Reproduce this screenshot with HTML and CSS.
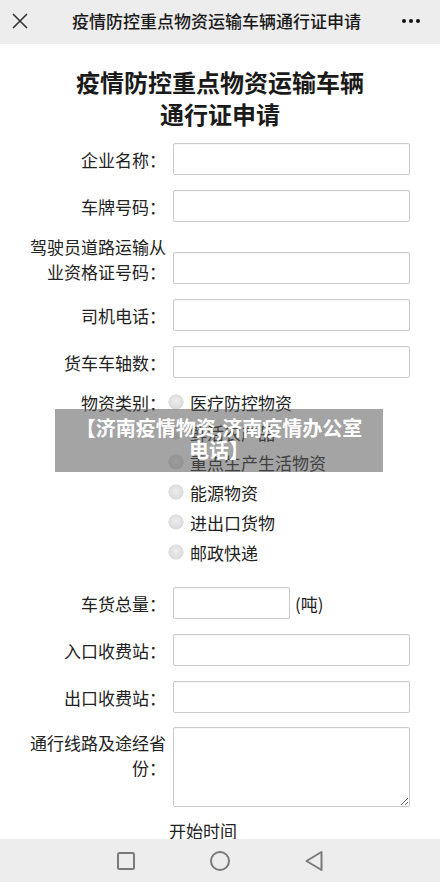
FILE: index.html
```html
<!DOCTYPE html>
<html lang="zh-CN">
<head>
<meta charset="utf-8">
<title>疫情防控重点物资运输车辆通行证申请</title>
<link rel="stylesheet" href="styles.css">
</head>
<body>
<div class="screen">
  <header class="topbar">
    <svg class="close" width="16" height="16" viewBox="0 0 16 16"><path d="M1 1L15 15M15 1L1 15" stroke="#333" stroke-width="1.6" fill="none"/></svg>
    <div class="topbar-title">疫情防控重点物资运输车辆通行证申请</div>
    <svg class="more" width="20" height="6" viewBox="0 0 20 6"><circle cx="3" cy="3" r="2" fill="#111"/><circle cx="10" cy="3" r="2" fill="#111"/><circle cx="17" cy="3" r="2" fill="#111"/></svg>
  </header>
  <main class="page">
    <h1 class="title">疫情防控重点物资运输车辆<br>通行证申请</h1>
    <form class="form">
      <div class="row first"><label class="label">企业名称：</label><input class="field" type="text"></div>
      <div class="row"><label class="label">车牌号码：</label><input class="field" type="text"></div>
      <div class="row multi"><label class="label">驾驶员道路运输从业资格证号码：</label><input class="field" type="text"></div>
      <div class="row"><label class="label">司机电话：</label><input class="field" type="text"></div>
      <div class="row"><label class="label">货车车轴数：</label><input class="field" type="text"></div>
      <div class="row radios-row"><label class="label radio-label">物资类别：</label>
        <div class="radios">
          <div class="option"><span class="radio"></span>医疗防控物资</div>
          <div class="option"><span class="radio"></span>鲜活农产品</div>
          <div class="option"><span class="radio"></span>重点生产生活物资</div>
          <div class="option"><span class="radio"></span>能源物资</div>
          <div class="option"><span class="radio"></span>进出口货物</div>
          <div class="option"><span class="radio"></span>邮政快递</div>
        </div>
      </div>
      <div class="row weight-row"><label class="label">车货总量：</label><input class="field short" type="text"><span class="unit">(吨)</span></div>
      <div class="row"><label class="label">入口收费站：</label><input class="field" type="text"></div>
      <div class="row"><label class="label">出口收费站：</label><input class="field" type="text"></div>
      <div class="row area-row"><label class="label area-label">通行线路及途经省份：</label><textarea class="field area"></textarea></div>
      <div class="start">开始时间</div>
    </form>
  </main>
  <div class="banner">【济南疫情物资,济南疫情办公室<br>电话】</div>
  <nav class="navbar">
    <svg width="18" height="18" viewBox="0 0 18 18"><rect x="1" y="1" width="16" height="16" rx="1.5" fill="none" stroke="#7a7a7a" stroke-width="2"/></svg>
    <svg width="20" height="20" viewBox="0 0 20 20"><circle cx="10" cy="10" r="9" fill="none" stroke="#7a7a7a" stroke-width="2"/></svg>
    <svg width="18" height="22" viewBox="0 0 18 22"><path d="M1.5 11L16.5 2V20Z" fill="none" stroke="#7a7a7a" stroke-width="2" stroke-linejoin="round"/></svg>
  </nav>
</div>
</body>
</html>
```
FILE: styles.css
```css
* { box-sizing: border-box; }
html, body { margin: 0; padding: 0; }
body {
  font-family: "Noto Sans CJK SC", "Noto Sans", sans-serif;
  color: #222;
  background: #fff;
}
.screen {
  position: relative;
  width: 440px;
  height: 882px;
  display: flex;
  flex-direction: column;
  overflow: hidden;
}
.topbar {
  height: 44px;
  flex: none;
  background: #ededed;
  display: grid;
  grid-template-columns: 1fr auto 1fr;
  align-items: center;
  padding: 0 19px 0 12px;
}
.close { justify-self: start; margin-top: -2px; }
.more { justify-self: end; margin-top: -2px; }
.topbar-title {
  font-size: 17px;
  font-weight: 500;
  color: #1a1a1a;
  line-height: 24px;
  margin-top: -2px;
}
.page {
  flex: 1;
  overflow: hidden;
}
.title {
  margin: 22px 0 0;
  text-align: center;
  font-size: 24px;
  line-height: 32px;
  font-weight: 700;
  color: #1a1a1a;
}
.form { margin: 0; }
.row {
  display: flex;
  align-items: center;
  margin-top: 15px;
  font-size: 17px;
}
.row.first { margin-top: 13px; }
.label {
  width: 150px;
  margin-left: 16px;
  text-align: right;
  line-height: 25px;
  color: #222;
  flex: none;
}
.field {
  width: 237px;
  height: 32px;
  margin: 0 0 0 7px;
  border: 1px solid #cbcbcb;
  border-radius: 2px;
  background: #fff;
  font: inherit;
  padding: 0 6px;
  outline: none;
  box-shadow: inset 0 1px 1px rgba(0,0,0,0.04);
}
.row.multi { align-items: flex-end; margin-top: 12px; }
.radios-row { align-items: flex-start; margin-top: 10px; }
.radio-label { line-height: 30px; }
.radios { margin-left: 3px; }
.option {
  display: flex;
  align-items: center;
  height: 30px;
  line-height: 30px;
  color: #222;
}
.radio {
  width: 14px;
  height: 14px;
  border-radius: 50%;
  margin-right: 7px;
  margin-top: -2px;
  background: radial-gradient(circle at 50% 45%, #ededed 0%, #e2e2e2 45%, #cfcfcf 100%);
  box-shadow: 0 0 0 0.5px #c4c4c4;
}
.weight-row { margin-top: 19px; }
.field.short { width: 117px; }
.unit { margin-left: 5px; line-height: 25px; }
.area-row { align-items: flex-start; margin-top: 14px; }
.area-label { padding-top: 3px; }
.field.area {
  height: 80px;
  resize: both;
  display: block;
}
.start {
  margin: 12px 0 0 169px;
  font-size: 17px;
  line-height: 24px;
  color: #222;
}
.banner {
  position: absolute;
  left: 55px;
  top: 409px;
  width: 328px;
  height: 63px;
  padding-top: 8px;
  background: rgba(90, 90, 90, 0.55);
  color: #fff;
  font-size: 20px;
  font-weight: 700;
  line-height: 22px;
  text-align: center;
}
.navbar {
  height: 43px;
  flex: none;
  background: #ededed;
  display: flex;
  align-items: center;
  justify-content: center;
  gap: 75px;
}
```
